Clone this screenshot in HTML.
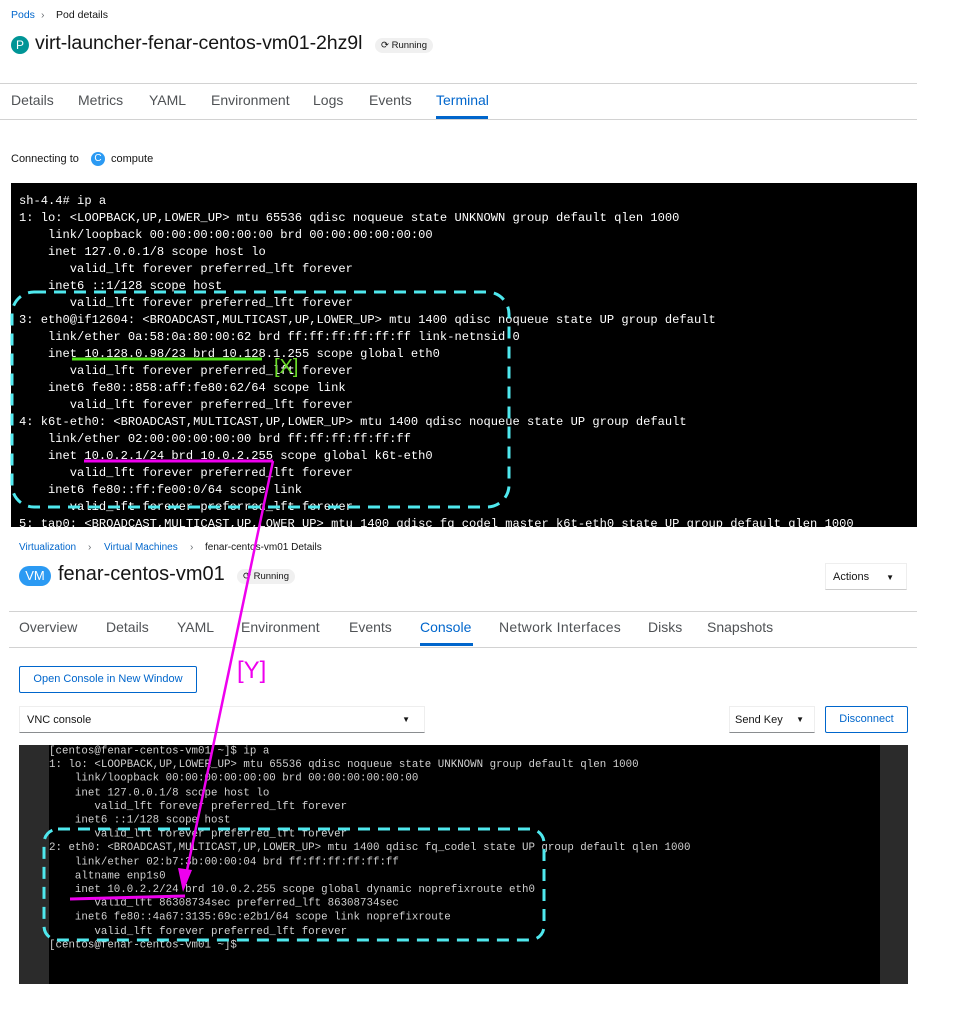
<!DOCTYPE html>
<html><head><meta charset="utf-8"><style>
*{margin:0;padding:0;box-sizing:border-box}
body{width:964px;height:1028px;background:#fff;position:relative;overflow:hidden;font-family:"Liberation Sans",sans-serif;color:#151515}
.a{position:absolute;white-space:nowrap}
.blue{color:#0066cc}
.tab{position:absolute;font-size:14px;color:#4f5255}
.term{position:absolute;left:11px;top:183px;width:906px;height:344px;background:#000;overflow:hidden}
.term pre{position:absolute;left:8px;top:10px;font-family:"Liberation Mono",monospace;font-size:12.1px;line-height:17px;color:#fff}
.con{position:absolute;left:19px;top:745px;width:889px;height:239px;background:#2b2b2b}
.con .in{position:absolute;left:30px;top:0;width:831px;height:239px;background:#000;overflow:hidden}
.con pre{position:absolute;left:0;top:0;font-family:"Liberation Mono",monospace;font-size:10.8px;line-height:13.2px;color:#d0d0d0;transform:scaleY(1.05);transform-origin:0 0}
.badge{position:absolute;background:#f0f0f0;border-radius:10px;font-size:9.5px;padding:0 6px;height:15px;line-height:15px}
.btn{position:absolute;border:1px solid #0066cc;border-radius:2px;color:#0066cc;font-size:11px;text-align:center}
</style></head><body>
<div class="a blue" style="left:11px;top:9px;font-size:10.5px">Pods</div>
<div class="a" style="left:41px;top:9px;font-size:10.5px;color:#6a6e73">›</div>
<div class="a" style="left:56px;top:9px;font-size:10.5px">Pod details</div>
<div class="a" style="left:11px;top:36px;width:18px;height:18px;border-radius:50%;background:#009596;color:#fff;font-size:12px;line-height:18px;text-align:center">P</div>
<div class="a" style="left:35px;top:32px;font-size:19.6px;letter-spacing:-0.1px">virt-launcher-fenar-centos-vm01-2hz9l</div>
<div class="badge" style="left:375px;top:38px">⟳ Running</div>
<div class="a" style="left:0;top:83px;width:917px;height:1px;background:#d2d2d2"></div>
<div class="a" style="left:0;top:119px;width:917px;height:1px;background:#d2d2d2"></div>
<div class="tab" style="left:11px;top:92px">Details</div>
<div class="tab" style="left:78px;top:92px">Metrics</div>
<div class="tab" style="left:149px;top:92px">YAML</div>
<div class="tab" style="left:211px;top:92px">Environment</div>
<div class="tab" style="left:313px;top:92px">Logs</div>
<div class="tab" style="left:369px;top:92px">Events</div>
<div class="tab" style="left:436px;top:92px;color:#0066cc">Terminal</div>
<div class="a" style="left:436px;top:116px;width:52px;height:3px;background:#0066cc"></div>
<div class="a" style="left:11px;top:153px;font-size:11px">Connecting to</div>
<div class="a" style="left:91px;top:152px;width:14px;height:14px;border-radius:50%;background:#2b9af3;color:#fff;font-size:10px;line-height:14px;text-align:center">C</div>
<div class="a" style="left:111px;top:153px;font-size:11px">compute</div>

<div class="term"><pre>sh-4.4# ip a
1: lo: &lt;LOOPBACK,UP,LOWER_UP&gt; mtu 65536 qdisc noqueue state UNKNOWN group default qlen 1000
    link/loopback 00:00:00:00:00:00 brd 00:00:00:00:00:00
    inet 127.0.0.1/8 scope host lo
       valid_lft forever preferred_lft forever
    inet6 ::1/128 scope host
       valid_lft forever preferred_lft forever
3: eth0@if12604: &lt;BROADCAST,MULTICAST,UP,LOWER_UP&gt; mtu 1400 qdisc noqueue state UP group default
    link/ether 0a:58:0a:80:00:62 brd ff:ff:ff:ff:ff:ff link-netnsid 0
    inet 10.128.0.98/23 brd 10.128.1.255 scope global eth0
       valid_lft forever preferred_lft forever
    inet6 fe80::858:aff:fe80:62/64 scope link
       valid_lft forever preferred_lft forever
4: k6t-eth0: &lt;BROADCAST,MULTICAST,UP,LOWER_UP&gt; mtu 1400 qdisc noqueue state UP group default
    link/ether 02:00:00:00:00:00 brd ff:ff:ff:ff:ff:ff
    inet 10.0.2.1/24 brd 10.0.2.255 scope global k6t-eth0
       valid_lft forever preferred_lft forever
    inet6 fe80::ff:fe00:0/64 scope link
       valid_lft forever preferred_lft forever
5: tap0: &lt;BROADCAST,MULTICAST,UP,LOWER_UP&gt; mtu 1400 qdisc fq_codel master k6t-eth0 state UP group default qlen 1000</pre></div>

<div class="a blue" style="left:19px;top:542px;font-size:10px">Virtualization</div>
<div class="a" style="left:88px;top:542px;font-size:10px;color:#6a6e73">›</div>
<div class="a blue" style="left:104px;top:542px;font-size:10px">Virtual Machines</div>
<div class="a" style="left:190px;top:542px;font-size:10px;color:#6a6e73">›</div>
<div class="a" style="left:205px;top:542px;font-size:10px">fenar-centos-vm01 Details</div>
<div class="a" style="left:19px;top:566px;width:32px;height:20px;border-radius:10px;background:#2b9af3;color:#fff;font-size:13px;line-height:20px;text-align:center">VM</div>
<div class="a" style="left:58px;top:563px;font-size:20px">fenar-centos-vm01</div>
<div class="badge" style="left:237px;top:569px">⟳ Running</div>
<div class="a" style="left:825px;top:563px;width:82px;height:27px;border:1px solid #eee;border-bottom-color:#ccc;font-size:11px;line-height:26px;padding-left:7px">Actions <span style="margin-left:14px;font-size:8px">▼</span></div>
<div class="a" style="left:9px;top:611px;width:908px;height:1px;background:#d2d2d2"></div>
<div class="a" style="left:9px;top:647px;width:908px;height:1px;background:#d2d2d2"></div>
<div class="tab" style="left:19px;top:619px">Overview</div>
<div class="tab" style="left:106px;top:619px">Details</div>
<div class="tab" style="left:177px;top:619px">YAML</div>
<div class="tab" style="left:241px;top:619px">Environment</div>
<div class="tab" style="left:349px;top:619px">Events</div>
<div class="tab" style="left:420px;top:619px;color:#0066cc">Console</div>
<div class="a" style="left:420px;top:643px;width:53px;height:3px;background:#0066cc"></div>
<div class="tab" style="left:499px;top:619px;letter-spacing:0.3px">Network Interfaces</div>
<div class="tab" style="left:648px;top:619px">Disks</div>
<div class="tab" style="left:707px;top:619px">Snapshots</div>
<div class="btn" style="left:19px;top:666px;width:178px;height:27px;line-height:25px">Open Console in New Window</div>
<div class="a" style="left:19px;top:706px;width:406px;height:27px;border:1px solid #eee;border-bottom-color:#8a8d90;font-size:11px;line-height:26px;padding-left:7px">VNC console<span style="position:absolute;right:14px;font-size:8px">▼</span></div>
<div class="a" style="left:729px;top:706px;width:86px;height:27px;border:1px solid #eee;border-bottom-color:#8a8d90;font-size:11px;line-height:26px;padding-left:5px">Send Key<span style="position:absolute;right:10px;font-size:8px">▼</span></div>
<div class="btn" style="left:825px;top:706px;width:83px;height:27px;line-height:25px">Disconnect</div>

<div class="con"><div class="in"><pre>[centos@fenar-centos-vm01 ~]$ ip a
1: lo: &lt;LOOPBACK,UP,LOWER_UP&gt; mtu 65536 qdisc noqueue state UNKNOWN group default qlen 1000
    link/loopback 00:00:00:00:00:00 brd 00:00:00:00:00:00
    inet 127.0.0.1/8 scope host lo
       valid_lft forever preferred_lft forever
    inet6 ::1/128 scope host
       valid_lft forever preferred_lft forever
2: eth0: &lt;BROADCAST,MULTICAST,UP,LOWER_UP&gt; mtu 1400 qdisc fq_codel state UP group default qlen 1000
    link/ether 02:b7:3b:00:00:04 brd ff:ff:ff:ff:ff:ff
    altname enp1s0
    inet 10.0.2.2/24 brd 10.0.2.255 scope global dynamic noprefixroute eth0
       valid_lft 86308734sec preferred_lft 86308734sec
    inet6 fe80::4a67:3135:69c:e2b1/64 scope link noprefixroute
       valid_lft forever preferred_lft forever
[centos@fenar-centos-vm01 ~]$</pre></div></div>

<svg class="a" style="left:0;top:0" width="964" height="1028">
<rect x="12" y="292" width="497" height="215" rx="22" fill="none" stroke="#4fe8ee" stroke-width="3" stroke-dasharray="12 8"/>
<rect x="44" y="829" width="500" height="111" rx="14" fill="none" stroke="#4fe8ee" stroke-width="3" stroke-dasharray="12 8"/>
<line x1="72" y1="359" x2="262" y2="359" stroke="#52e01a" stroke-width="3"/>
<text x="274" y="373" font-family="Liberation Sans,sans-serif" font-size="20" fill="#6bdc2a">[X]</text>
<line x1="84" y1="461" x2="273" y2="461" stroke="#ee00ee" stroke-width="3"/>
<line x1="273" y1="461" x2="185" y2="880" stroke="#ee00ee" stroke-width="2.5"/>
<polygon points="178,868 192,870 183,892" fill="#ee00ee"/>
<line x1="70" y1="899" x2="185" y2="896" stroke="#ee00ee" stroke-width="3"/>
<text x="237" y="678" font-family="Liberation Sans,sans-serif" font-size="24" fill="#ee00ee">[Y]</text>
</svg>
</body></html>
